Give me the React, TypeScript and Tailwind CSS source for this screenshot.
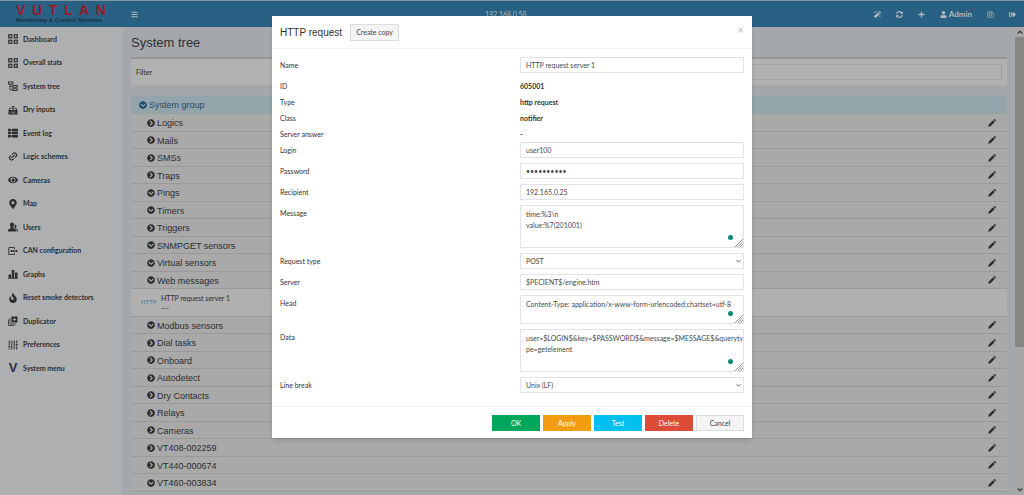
import React from 'react';
import { Link2 } from 'lucide-react';
import {
    FaBars,
    FaChevronCircleDown,
    FaChevronCircleRight,
    FaEye,
    FaFire,
    FaMagic,
    FaMapMarkerAlt,
    FaPlus,
    FaRegSave,
    FaSignOutAlt,
    FaSyncAlt,
    FaThList,
    FaUser,
} from 'react-icons/fa';

const GridIcon = () => (
    <svg viewBox="0 0 20 20" className="size-[10px]" fill="none" stroke="currentColor" strokeWidth="2.4">
        <rect x="1.5" y="1.5" width="6" height="6" />
        <rect x="12.5" y="1.5" width="6" height="6" />
        <rect x="1.5" y="12.5" width="6" height="6" />
        <rect x="12.5" y="12.5" width="6" height="6" />
    </svg>
);

const TreeIcon = () => (
    <svg viewBox="0 0 20 20" className="size-[10px]" fill="none" stroke="currentColor" strokeWidth="1.8">
        <rect x="1" y="2" width="9" height="4" />
        <rect x="9.5" y="9" width="9" height="3.5" />
        <rect x="9.5" y="15.5" width="9" height="3.5" />
        <path d="M4 6v11.5h5.5M4 10.5h5.5" />
    </svg>
);

const DryIcon = () => (
    <svg viewBox="0 0 20 20" className="size-[10px]">
        <path d="M1 10h18v9H1z" fill="currentColor" />
        <path d="M3 10V7h3M17 10V7h-3M6 5l2-2h4l2 2M10 4v6M8 7h4" fill="none" stroke="currentColor" strokeWidth="1.8" />
        <path d="M6 13v3M9 13v3h4v-3" fill="none" stroke="#adafb1" strokeWidth="1.3" />
    </svg>
);

const UsersIcon = () => (
    <svg viewBox="0 0 20 20" className="size-[10px]" fill="currentColor">
        <path d="M8 1c3 0 4 2 4 4.500c0 2-1 3.500-1.500 4.500v2l4.500 2.500c1 .6 1.200 1.500 1.200 4.500H0c0-3 .2-3.900 1.200-4.500L5.500 12v-2C5 9 4 7.500 4 5.500C4 3 5 1 8 1z" />
        <path d="M13.500 5c2.500 0 3.500 1.600 3.500 3.500c0 1.500-.7 2.500-1.200 3.500v1l3 1.700c1 .6 1.200 1.300 1.200 4.300h-2.500c0-3-.4-4.500-1.500-5.200L13 12z" />
    </svg>
);

const CanIcon = () => (
    <svg viewBox="0 0 20 20" className="size-[10px]" fill="none" stroke="currentColor" strokeWidth="1.8">
        <path d="M13 6V3H1.500v14H13v-3" />
        <path d="M5 10h14" />
        <path d="M7 8v4M11.500 8v4M17 8v4" strokeWidth="2.6" />
    </svg>
);

const GraphIcon = () => (
    <svg viewBox="0 0 20 20" className="size-[10px]" fill="currentColor">
        <path d="M1 11h5v7H1zM7.500 2h5v16h-5zM14 7h5v11h-5zM0 18h20v1.500H0z" />
    </svg>
);

const CopyIcon = () => (
    <svg viewBox="0 0 20 20" className="size-[10px]">
        <path d="M7 1h12v12H7z" fill="currentColor" />
        <path d="M4 4v12h12M1 7v12h12" fill="none" stroke="currentColor" strokeWidth="1.6" />
        <path d="M13 4v6M10 7h6" stroke="#adafb1" strokeWidth="1.8" />
    </svg>
);

const SlidersIcon = () => (
    <svg viewBox="0 0 20 20" className="size-[10px]" fill="none" stroke="currentColor" strokeWidth="2">
        <path d="M2.500 1v10M2.500 15v4M7.500 1v3M7.500 8v11M12.500 1v11M12.500 16v3M17.500 1v6M17.500 11v8" />
        <path d="M0.500 13h4M5.500 6h4M10.500 14h4M15.500 9h4" />
    </svg>
);

const PencilIcon = () => (
    <svg viewBox="0 0 16 16" className="size-2" fill="currentColor">
        <path d="M10 2.500L13.500 6L5 14.500L0.500 15.500L1.500 11zM11 1.500l1-1q1-.8 2 0l1.500 1.500q.8 1 0 2l-1 1z" />
    </svg>
);

const menu = [
    { label: 'Dashboard', icon: <GridIcon /> },
    { label: 'Overall stats', icon: <GridIcon /> },
    { label: 'System tree', icon: <TreeIcon /> },
    { label: 'Dry inputs', icon: <DryIcon /> },
    { label: 'Event log', icon: <FaThList /> },
    { label: 'Logic schemes', icon: <Link2 className="size-[11px] -rotate-45" strokeWidth={2.8} /> },
    { label: 'Cameras', icon: <FaEye /> },
    { label: 'Map', icon: <FaMapMarkerAlt /> },
    { label: 'Users', icon: <UsersIcon /> },
    { label: 'CAN configuration', icon: <CanIcon /> },
    { label: 'Graphs', icon: <GraphIcon /> },
    { label: 'Reset smoke detectors', icon: <FaFire /> },
    { label: 'Duplicator', icon: <CopyIcon /> },
    { label: 'Preferences', icon: <SlidersIcon /> },
    { label: 'System menu', icon: <span className="font-['Liberation_Sans'] text-[13px]">V</span> },
];

const rows = [
    { label: 'Logics' },
    { label: 'Mails' },
    { label: 'SMSs' },
    { label: 'Traps' },
    { label: 'Pings', open: true },
    { label: 'Timers', open: true },
    { label: 'Triggers' },
    { label: 'SNMPGET sensors', open: true },
    { label: 'Virtual sensors', open: true },
    { label: 'Web messages', open: true },
    { label: 'HTTP request server 1', item: true },
    { label: 'Modbus sensors', open: true },
    { label: 'Dial tasks' },
    { label: 'Onboard' },
    { label: 'Autodetect' },
    { label: 'Dry Contacts' },
    { label: 'Relays' },
    { label: 'Cameras' },
    { label: 'VT408-002259' },
    { label: 'VT440-000674' },
    { label: 'VT460-003834', open: true },
];

const Header = () => (
    <header className="flex h-[27px] shrink-0 items-center border-t border-[#8195a0] bg-[#286184] text-[#b3b8bb]">
        <div className="w-[122px] shrink-0 px-4 font-['Liberation_Sans'] font-bold">
            <div aria-label="VUTLAN" className="flex justify-between text-[14px] leading-[13px] text-[#98192a]">
                {'VUTLAN'.split('').map((letter) => (
                    <span key={letter}>{letter}</span>
                ))}
            </div>
            <div className="text-[6px] leading-[7px] whitespace-nowrap text-[#17303f]">
                Monitoring &amp; Control Systems
            </div>
        </div>
        <button type="button" aria-label="Toggle menu" className="ml-[9px] text-[7px]">
            <FaBars />
        </button>
        <span className="flex-1 text-center">192.168.0.58</span>
        <nav className="flex items-center gap-[15px] pr-2 text-[8px]">
            <button type="button" aria-label="Wizard" className="text-[7px]"><FaMagic /></button>
            <button type="button" aria-label="Refresh" className="text-[7px]"><FaSyncAlt /></button>
            <button type="button" aria-label="Add" className="text-[7px]"><FaPlus /></button>
            <a href="#admin" className="flex items-center gap-[2px] font-bold"><FaUser className="text-[7px]" />Admin</a>
            <button type="button" aria-label="Save" className="text-[7px]"><FaRegSave /></button>
            <button type="button" aria-label="Sign out" className="text-[7px]"><FaSignOutAlt /></button>
        </nav>
    </header>
);

const Sidebar = () => (
    <aside className="w-[122px] shrink-0 bg-[#adafb1] font-bold text-[#2b2d2f]">
        {menu.map(({ label, icon }) => (
            <a key={label} href="#menu" className="flex h-[23px] items-center gap-[5px] pl-2 odd:h-[24px]">
                <span className="flex w-[10px] justify-center text-[10px]">{icon}</span>
                {label}
            </a>
        ))}
    </aside>
);

const Tree = () => (
    <main className="min-w-0 flex-1 pr-2 pl-[9px] font-['Liberation_Sans']">
        <h1 className="h-[30px] text-[13px] leading-[31px] text-[#2f3133]">System tree</h1>
        <div className="flex h-[28px] items-center border-t-2 border-[#94979b] bg-[#b1b1b1] px-[5px] font-['Lato']">
            <label htmlFor="filter" className="w-[160px]">Filter</label>
            <input id="filter" className="h-4 min-w-0 flex-1 border border-[#9fa1a8]" />
        </div>
        <div className="mt-[11px] flex h-[18px] items-center gap-[2px] border-b border-[#9a9fa2] bg-[#94a4ab] pl-2 text-[9px] text-[#1c4b68]">
            <FaChevronCircleDown className="text-[8px]" />
            <span className="pt-px leading-3">System group</span>
        </div>
        <div>
            {rows.map(({ label, open, item }) =>
                item ? (
                    <div key={label} className="flex h-[28px] border-b border-[#999] bg-[#b0b0b0] pt-1 pl-[10px] font-['Lato'] leading-[10px]">
                        <span className="w-5 pt-1 text-[6px] text-[#3a7ca3]">HTTP</span>
                        <span>{label}<br />---</span>
                    </div>
                ) : (
                    <div key={label} className="flex h-[17px] items-center gap-[2px] border-b border-[#999] bg-[#a9a9a9] pr-[11px] pl-4 text-[9px] odd:h-[18px]">
                        {open ? <FaChevronCircleDown className="text-[8px]" /> : <FaChevronCircleRight className="text-[8px]" />}
                        <span className="flex-1 pt-px leading-3">{label}</span>
                        <button type="button" aria-label={`Edit ${label}`}><PencilIcon /></button>
                    </div>
                )
            )}
        </div>
    </main>
);

const Scrollbar = () => (
    <div className="flex w-[9px] shrink-0 flex-col items-center bg-[#a7a7a7] text-[#444]">
        <svg viewBox="0 0 8 8" className="h-[10px] w-[6px]" fill="none" stroke="currentColor" strokeWidth="2"><path d="M1 6l3-3l3 3" /></svg>
        <div className="h-[310px] w-full bg-[#868682]" />
        <svg viewBox="0 0 8 8" className="mt-auto h-[10px] w-[6px]" fill="none" stroke="currentColor" strokeWidth="2"><path d="M1 2l3 3l3-3" /></svg>
    </div>
);

const fields = [
    { label: 'Name', value: 'HTTP request server 1', kind: 'text' },
    { label: 'ID', value: '605001', kind: 'static' },
    { label: 'Type', value: 'http request', kind: 'static' },
    { label: 'Class', value: 'notifier', kind: 'static' },
    { label: 'Server answer', value: '-', kind: 'static' },
    { label: 'Login', value: 'user100', kind: 'text' },
    { label: 'Password', value: 'qwerty1234', kind: 'password' },
    { label: 'Recipient', value: '192.165.0.25', kind: 'text' },
    { label: 'Message', value: 'time:%3\\n\nvalue:%7(201001)', kind: 'area', size: 'h-[43px]' },
    { label: 'Request type', value: 'POST', kind: 'select' },
    { label: 'Server', value: '$PECIENT$/engine.htm', kind: 'text' },
    { label: 'Head', value: 'Content-Type: application/x-www-form-urlencoded;chartset=utf-8', kind: 'area', size: 'h-[29px]' },
    { label: 'Data', value: 'user=$LOGIN$&key=$PASSWORD$&message=$MESSAGE$&queryty\npe=getelement', kind: 'area', size: 'h-[43px]' },
    { label: 'Line break', value: 'Unix (LF)', kind: 'select' },
];

const box = 'block w-full border border-[#e2e2e8] bg-white pl-[5px] text-[#4a4a4a]';

const Control = ({ field }: { field: any }) => {
    if (field.kind === 'area') {
        return (
            <div className="relative">
                <textarea id={field.label} defaultValue={field.value} className={`${box} ${field.size} resize-none overflow-hidden pt-[3px] leading-[11px] whitespace-pre`} />
                <span className="absolute right-[11px] bottom-[8px] size-[5px] rounded-full bg-[#0d8a74]" />
                <svg viewBox="0 0 8 8" className="absolute right-px bottom-px size-2" stroke="#888" strokeWidth="0.9">
                    <path d="M0 8L8 0M2.500 8L8 2.500M5 8L8 5" />
                </svg>
            </div>
        );
    }
    if (field.kind === 'select') {
        return (
            <div className="relative">
                <select id={field.label} className={`${box} h-4 appearance-none`}>
                    <option>{field.value}</option>
                </select>
                <svg viewBox="0 0 8 8" className="absolute right-[3px] bottom-[5px] size-[5px]" fill="none" stroke="#555" strokeWidth="1.5">
                    <path d="M1 2l3 3l3-3" />
                </svg>
            </div>
        );
    }
    return <input id={field.label} type={field.kind} defaultValue={field.value} className={`${box} h-4`} />;
};

const Modal = () => (
    <div className="absolute inset-x-0 top-4 flex justify-center">
        <form role="dialog" className="w-[480px] bg-white text-[#333] shadow-md">
            <div className="flex h-[33px] items-center border-b border-[#f2f2f2] px-2">
                <h2 className="font-['Liberation_Sans'] text-[10px]">HTTP request</h2>
                <button type="button" className="ml-2 h-[17px] w-[49px] border border-[#ddd] bg-[#f4f4f4] text-[#444]">Create copy</button>
                <button type="button" aria-label="Close" className="mb-1 ml-auto text-[11px] text-[#bbb]">×</button>
            </div>
            <div className="p-2">
                {fields.map((field) =>
                    field.kind === 'static' ? (
                        <div key={field.label} className="grid h-4 grid-cols-[240px_1fr] items-center">
                            <span>{field.label}</span>
                            <span className="font-bold">{field.value}</span>
                        </div>
                    ) : (
                        <div key={field.label} className="mb-[5px] grid grid-cols-[240px_1fr]">
                            <label htmlFor={field.label} className="leading-4">{field.label}</label>
                            <Control field={field} />
                        </div>
                    )
                )}
            </div>
            <div className="flex justify-end gap-[3px] border-t border-[#f2f2f2] px-2 pt-2 pb-[7px] text-white">
                <button type="submit" className="h-4 w-12 bg-[#00a65a]">OK</button>
                <button type="button" className="h-4 w-12 bg-[#f39c12]">Apply</button>
                <button type="button" className="h-4 w-12 bg-[#00c0ef]">Test</button>
                <button type="button" className="h-4 w-12 bg-[#dd4b39]">Delete</button>
                <button type="button" className="h-4 w-12 border border-[#ddd] bg-[#f4f4f4] text-[#444]">Cancel</button>
            </div>
        </form>
    </div>
);

const App = () => (
    <div className="relative flex h-screen flex-col overflow-hidden bg-[#a4a8ac] font-['Lato',sans-serif] text-[7px] text-[#2b2d2f]">
        <Header />
        <div className="flex min-h-0 flex-1">
            <Sidebar />
            <Tree />
            <Scrollbar />
        </div>
        <Modal />
    </div>
);

export default App;
